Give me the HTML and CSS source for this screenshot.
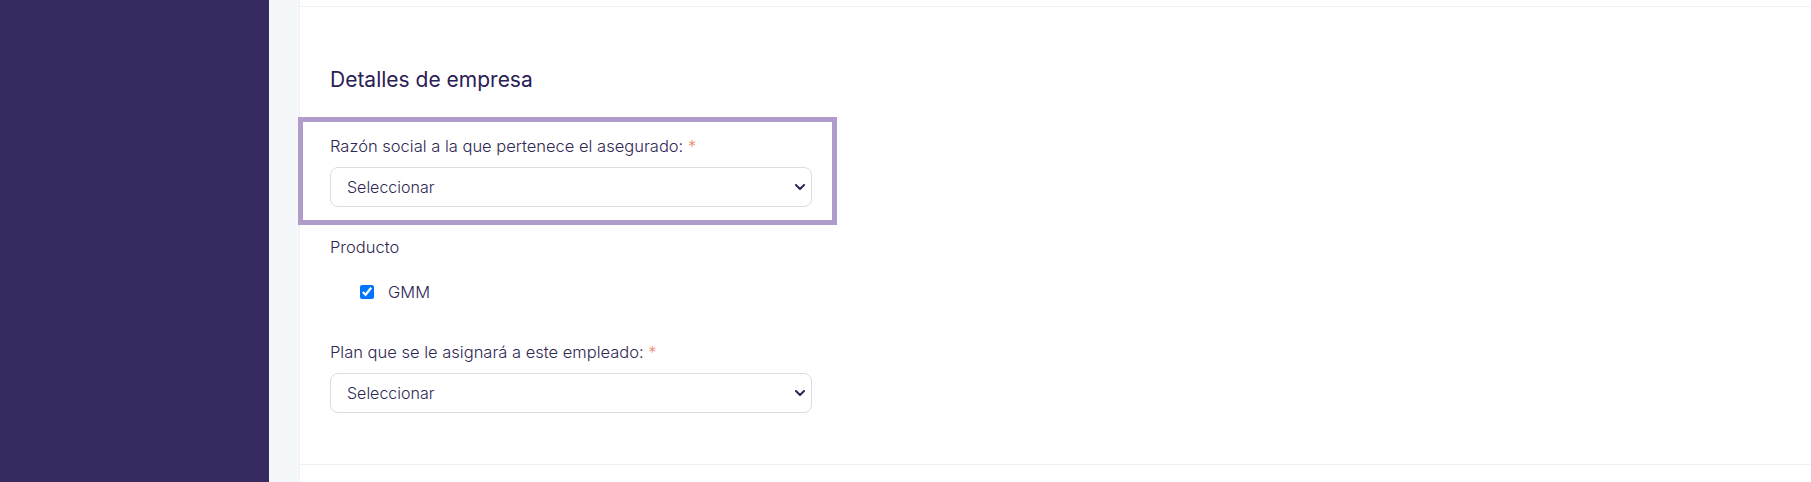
FILE: index.html
```html
<!DOCTYPE html>
<html lang="es">
<head>
    <meta charset="UTF-8">
    <meta name="viewport" content="width=device-width, initial-scale=1.0">
    <title>Detalles de empresa</title>
    <link rel="stylesheet" href="styles.css">
</head>
<body>
    <div class="layout">
        <aside class="sidebar"></aside>
        <div class="gutter"></div>

        <main class="panel">
            <div class="panel-top"></div>

            <section class="company">
                <h2 class="section-title">Detalles de empresa</h2>

                <div class="highlight">
                    <label class="field-label" for="razon">Razón social a la que pertenece el asegurado: <span class="req">*</span></label>
                    <div class="select-wrap">
                        <select id="razon" class="select">
                            <option>Seleccionar</option>
                        </select>
                        <svg class="chevron" width="10" height="6" viewBox="0 0 10 6"><path d="M1 1l4 4 4-4" fill="none" stroke="#2f2655" stroke-width="2" stroke-linecap="round" stroke-linejoin="round"/></svg>
                    </div>
                </div>

                <p class="field-label product-label">Producto</p>
                <label class="check-row">
                    <input type="checkbox" checked>
                    <span>GMM</span>
                </label>

                <label class="field-label plan-label" for="plan">Plan que se le asignará a este empleado: <span class="req">*</span></label>
                <div class="select-wrap">
                    <select id="plan" class="select">
                        <option>Seleccionar</option>
                    </select>
                    <svg class="chevron" width="10" height="6" viewBox="0 0 10 6"><path d="M1 1l4 4 4-4" fill="none" stroke="#2f2655" stroke-width="2" stroke-linecap="round" stroke-linejoin="round"/></svg>
                </div>
            </section>

            <div class="panel-bottom"></div>
        </main>
    </div>
</body>
</html>
```

FILE: styles.css
```css
* {
    box-sizing: border-box;
    margin: 0;
    padding: 0;
}

body {
    font-family: Inter, Lato, sans-serif;
    color: #2f2754;
    background: #fff;
}

.layout {
    display: flex;
    height: 482px;
    overflow: hidden;
}

.sidebar {
    width: 269px;
    flex-shrink: 0;
    background: #372a60;
}

.gutter {
    width: 30px;
    flex-shrink: 0;
    background: #f5f8fb;
}

/* White card with the form */
.panel {
    flex: 1;
    background: #fff;
    border-left: 1px solid #eef0f3;
}

.panel-top {
    height: 7px;
    border-bottom: 1px solid #eef0f3;
}

.company {
    padding: 59px 0 51px 30px;
    border-bottom: 1px solid #eef0f3;
}

.section-title {
    font-size: 21px;
    font-weight: 400;
    line-height: 28px;
    color: #2a2055;
    margin-bottom: 23px;
}

/* Highlighted field */
.highlight {
    width: 539px;
    margin-left: -32px;
    padding: 14px 20px 13px 27px;
    border: 5px solid #af9ccb;
}

.field-label {
    display: block;
    font-size: 16.5px;
    font-weight: 300;
    line-height: 20px;
    margin-bottom: 11px;
}

.req {
    color: #f0876a;
}

.select-wrap {
    position: relative;
    width: 482px;
}

.select {
    display: block;
    width: 100%;
    height: 40px;
    padding: 0 36px 0 16px;
    font-family: inherit;
    font-size: 16px;
    font-weight: 300;
    color: #2f2754;
    background: #fff;
    border: 1px solid #dcdde2;
    border-radius: 8px;
    appearance: none;
    -webkit-appearance: none;
}

.chevron {
    position: absolute;
    right: 7px;
    top: 17px;
}

.product-label {
    margin-top: 12px;
    margin-bottom: 25px;
}

.check-row {
    display: flex;
    align-items: center;
    gap: 14px;
    padding-left: 30px;
    font-size: 16.5px;
    font-weight: 300;
    line-height: 20px;
}

.check-row input {
    width: 14px;
    height: 14px;
    margin: 0;
}

.plan-label {
    margin-top: 40px;
}
```
